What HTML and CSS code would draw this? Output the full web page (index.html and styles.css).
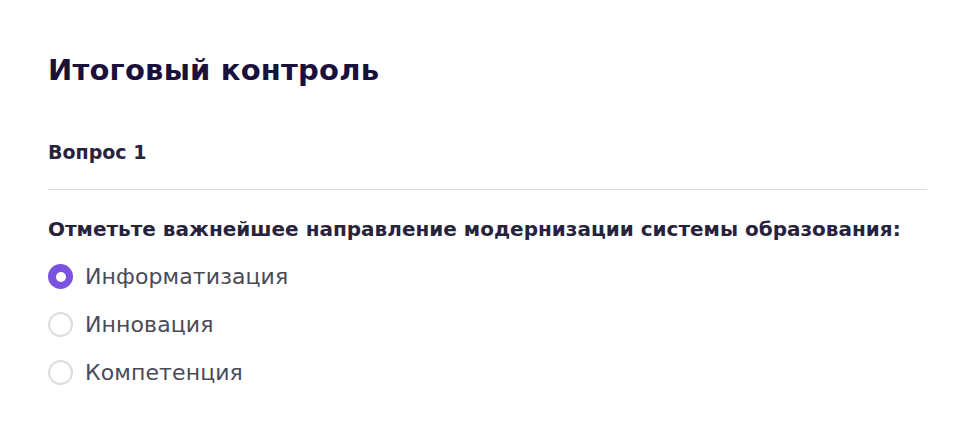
FILE: index.html
```html
<!DOCTYPE html>
<html lang="ru">
<head>
<meta charset="utf-8">
<link rel="stylesheet" href="styles.css">
</head>
<body>
<main class="page">
  <h1 class="title">Итоговый контроль</h1>
  <div class="q-head">Вопрос 1</div>
  <div class="divider"></div>
  <div class="q-text">Отметьте важнейшее направление модернизации системы образования:</div>
  <ul class="options">
    <li class="option"><span class="radio checked"></span><span class="label">Информатизация</span></li>
    <li class="option"><span class="radio"></span><span class="label">Инновация</span></li>
    <li class="option"><span class="radio"></span><span class="label">Компетенция</span></li>
  </ul>
</main>
</body>
</html>
```

FILE: styles.css
```css
* { box-sizing: border-box; }
html, body { margin: 0; padding: 0; background: #fff; }
body { font-family: "DejaVu Sans", "Noto Sans", sans-serif; }
.page { padding: 50px 49px 0 48px; }
.title {
  margin: 0;
  font-size: 29px;
  font-weight: 700;
  color: #1b0f3b;
  line-height: 40px;
  letter-spacing: 0.2px;
}
.q-head {
  margin-top: 50px;
  font-size: 19px;
  font-weight: 700;
  color: #28233d;
  line-height: 24px;
}
.divider {
  margin-top: 25px;
  height: 1px;
  background: #dcdcdc;
}
.q-text {
  margin-top: 26px;
  font-size: 20px;
  font-weight: 700;
  color: #28233d;
  line-height: 26px;
}
.options { list-style: none; margin: 22px 0 0; padding: 0; display: flex; flex-direction: column; gap: 23px; }
.option { display: flex; align-items: center; gap: 12px; height: 25px; }
.radio {
  width: 25px; height: 25px; border-radius: 50%;
  border: 2px solid #dcdcdc; flex: none;
  display: flex; align-items: center; justify-content: center;
}
.radio.checked { border: none; background: #7a52df; }
.radio.checked::after { content: ""; width: 10px; height: 10px; border-radius: 50%; background: #fff; }
.label { font-size: 22px; color: #4b4a55; font-weight: 400; letter-spacing: 0.1px; }
```
